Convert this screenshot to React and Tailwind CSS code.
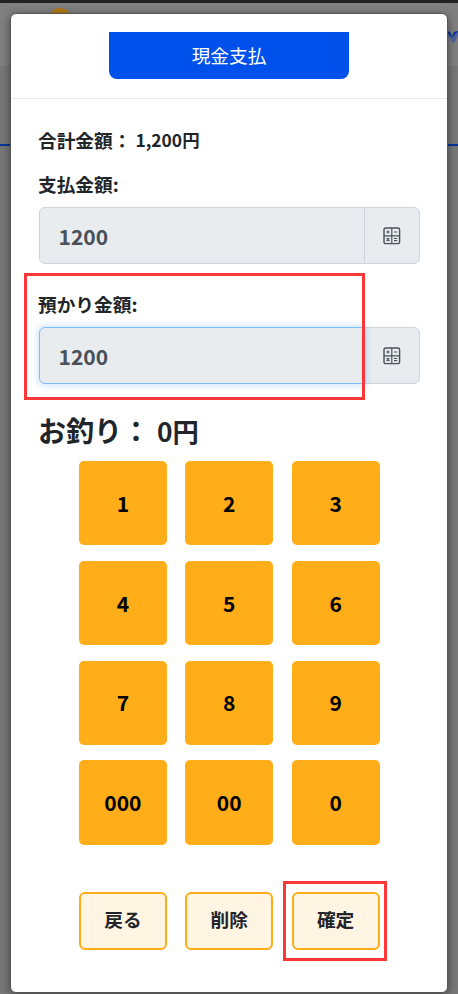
const keys = ["1", "2", "3", "4", "5", "6", "7", "8", "9", "000", "00", "0"];

const CalculatorIcon = () => (
  <svg width="18" height="18" viewBox="0 0 18 18" fill="none" stroke="#495057" strokeWidth="1.2">
    <rect x="1" y="1" width="15.6" height="15.6" rx="1.6" strokeWidth="1.4" />
    <path d="M8.8 1v15.6M1 8.8h15.6" />
    <path d="M3.4 5h3.2M5 3.4v3.2M11 5h3.2M3.6 11.2l2.8 2.8M6.4 11.2l-2.8 2.8M11 11.5h3.2M11 13.7h3.2" />
  </svg>
);

const AmountField = ({ label, value, active }) => (
  <div>
    <div className="h-[28px] text-[18.7px] leading-[28px] font-bold">{label}</div>
    <div className="mt-[9px] ml-[0.5px] flex h-[57px]">
      <input
        readOnly
        value={value}
        className={
          active
            ? "relative z-10 w-[326px] rounded-l-[6px] border border-[#80bdff] bg-[#e8ecef] px-[19px] pt-[2px] text-[21px] font-bold text-[#495057] outline-none shadow-[0_0_6px_2px_rgba(0,123,255,0.18)]"
            : "w-[326px] rounded-l-[6px] border border-[#ced4da] bg-[#e8ecef] px-[19px] pt-[2px] text-[21px] font-bold text-[#495057] outline-none"
        }
      />
      <div className="-ml-px flex w-[58px] items-center justify-center rounded-r-[6px] border border-[#ced4da] bg-[#e8ecef]">
        <CalculatorIcon />
      </div>
    </div>
  </div>
);

const ActionButton = ({ children }) => (
  <button className="h-[58px] rounded-[6px] border-2 border-[#ffac17] bg-[#fff5e2] pb-[3px] text-[18.7px] font-bold text-[#212529]">
    {children}
  </button>
);

/* Dimmed page behind the dialog */
const Backdrop = () => (
  <div className="flex h-full flex-col bg-[#777]">
    <div className="h-[3px] bg-[#222]" />
    <div className="relative flex h-[63px] justify-end bg-[#7f7f7f]">
      <div className="absolute top-[5px] left-[49px] size-[22px] rounded-full bg-[#b17a12]" />
      <svg className="mt-[26px]" width="11" height="16" viewBox="0 0 11 16">
        <path d="M0 2l3 1 2 4 2-4 4-1v4l-3 7-2 1-3-5-3-2z" fill="#4a639c" />
        <path d="M0 2l3 1 2 4-1 1-2-3-2-1zM11 2l-4 1-2 5 2-1 2-3 2-1z" fill="#0b3593" />
      </svg>
    </div>
    <div className="h-[78px]" />
    <div className="h-[2px] bg-[#00349c]" />
    <div className="flex-1" />
  </div>
);

export default function App() {
  return (
    <div className="relative h-[994px] w-[458px] overflow-hidden font-['Noto_Sans_CJK_JP','Liberation_Sans',sans-serif] text-[#212529]">
      <Backdrop />

      <div className="absolute top-[13px] left-[10px] h-[980px] w-[438px] rounded-[6px] border border-[#555] bg-white shadow-[0_2px_8px_rgba(0,0,0,0.45)]">
        <div className="flex h-[85px] justify-center border-b border-[#e5e8ec] pt-[18px]">
          <div className="h-[47px] w-[240px] rounded-b-[8px] bg-[#0051eb] text-center text-[18.7px] leading-[46px] text-white">
            現金支払
          </div>
        </div>

        <div className="px-[27px] pt-[27px]">
          <div className="flex h-[28px] items-center text-[18.7px] font-bold">
            <span>合計金額：</span>
            <span className="ml-[4px] pt-px text-[17.4px]">1,200円</span>
          </div>

          <div className="mt-[16px] flex flex-col gap-[26px]">
            <AmountField label="支払金額:" value="1200" />
            <AmountField label="預かり金額:" value="1200" active />
          </div>

          <div className="mt-[25px] flex h-[42px] items-center text-[28px] font-bold">
            <span>お釣り：</span>
            <span className="ml-[7px] pt-[2px] text-[26.3px]">0円</span>
          </div>

          <div className="mx-[41px] mt-[10px] grid w-[300.5px] grid-cols-3 gap-x-[18.5px] gap-y-[15.5px]">
            {keys.map((key) => (
              <button key={key} className="h-[84.3px] rounded-[5px] bg-[#ffad18] pt-px text-[21px] font-bold text-black">
                {key}
              </button>
            ))}
          </div>

          <div className="mx-[41px] mt-[47.3px] grid w-[300.5px] grid-cols-3 gap-x-[18.5px]">
            <ActionButton>戻る</ActionButton>
            <ActionButton>削除</ActionButton>
            <ActionButton>確定</ActionButton>
          </div>
        </div>
      </div>

      {/* Highlight frames */}
      <div className="absolute top-[273px] left-[24px] z-20 h-[127px] w-[341px] border-3 border-[#fc3737]" />
      <div className="absolute top-[881px] left-[283px] z-20 h-[80px] w-[104px] border-3 border-[#fc3737]" />
    </div>
  );
}
